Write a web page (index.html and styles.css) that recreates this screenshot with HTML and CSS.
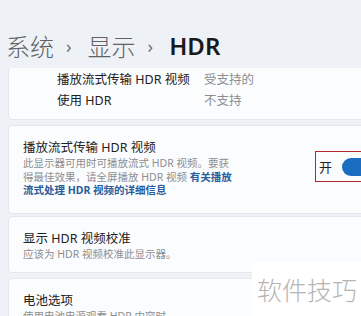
FILE: index.html
```html
<!DOCTYPE html>
<html lang="zh-CN">
<head>
    <meta charset="UTF-8">
    <meta name="viewport" content="width=device-width, initial-scale=1.0">
    <title>HDR</title>
    <link rel="stylesheet" href="styles.css">
</head>
<body>
    <div class="page">
        <div class="breadcrumb">
            <span class="crumb">系统</span>
            <span class="sep">›</span>
            <span class="crumb">显示</span>
            <span class="sep">›</span>
            <span class="crumb current">HDR</span>
        </div>

        <div class="card info">
            <div class="info-row">
                <span class="info-label">播放流式传输 HDR 视频</span>
                <span class="info-value">受支持的</span>
            </div>
            <div class="info-row">
                <span class="info-label">使用 HDR</span>
                <span class="info-value">不支持</span>
            </div>
        </div>

        <div class="group">
            <div class="card setting stream">
                <div class="setting-text">
                    <div class="setting-title">播放流式传输 HDR 视频</div>
                    <div class="setting-desc">此显示器可用时可播放流式 HDR 视频。要获得最佳效果，请全屏播放 HDR 视频 <a href="#" class="link">有关播放流式处理 HDR 视频的详细信息</a></div>
                </div>
                <div class="toggle-box">
                    <span class="toggle-label">开</span>
                    <span class="toggle"><span class="knob"></span></span>
                </div>
            </div>

            <div class="card setting">
                <div class="setting-text">
                    <div class="setting-title">显示 HDR 视频校准</div>
                    <div class="setting-desc">应该为 HDR 视频校准此显示器。</div>
                </div>
            </div>
        </div>

        <div class="card setting">
            <div class="setting-text">
                <div class="setting-title">电池选项</div>
                <div class="setting-desc">使用电池电源观看 HDR 内容时</div>
            </div>
        </div>
    </div>

    <div class="watermark">软件技巧</div>
</body>
</html>
```

FILE: styles.css
```css
body {
    margin: 0;
    width: 361px;
    height: 316px;
    overflow: hidden;
    background-color: #eef2f7;
    font-family: "Noto Sans", "Noto Sans CJK SC", sans-serif;
    color: #1b1b1b;
    position: relative;
}

.page {
    padding-left: 8px;
    width: 392px;
}

.breadcrumb {
    height: 68px;
    display: flex;
    align-items: center;
    font-size: 24px;
    line-height: 28px;
    padding-top: 24px;
    box-sizing: border-box;
    margin-left: -2px;
}

.crumb {
    color: #5f6266;
    font-family: "Noto Sans CJK SC", sans-serif;
    font-weight: 300;
}

.crumb.current {
    color: #1a1a1a;
    font-family: "Noto Sans", "Noto Sans CJK SC", sans-serif;
    font-weight: 600;
}

.sep {
    color: #6a6d72;
    font-size: 18px;
    margin: 0 16px 0 12px;
}

.card {
    background-color: #fbfcfd;
    border: 1px solid #e4e8ed;
    border-radius: 4px;
    box-sizing: border-box;
}

.info {
    height: 52px;
    padding: 0 0 0 48px;
    margin-bottom: 5px;
    border-top: none;
}

.info-row {
    display: flex;
    height: 21px;
    align-items: center;
    font-size: 12.5px;
}

.info-label {
    width: 147px;
    color: #222;
}

.info-value {
    color: #8a8c90;
}

.group {
    display: flex;
    flex-direction: column;
    gap: 2px;
    margin-bottom: 5px;
}

.setting {
    display: flex;
    padding: 13px 14px 11px 14px;
}

.stream {
    padding-bottom: 15px;
}

.setting-text {
    width: 212px;
}

.setting-title {
    font-size: 12.5px;
    line-height: 18px;
    color: #222;
}

.setting-desc {
    font-size: 10.5px;
    line-height: 13.5px;
    color: #8c8e92;
}

.link {
    color: #2a5c9c;
    font-weight: 700;
    text-decoration: none;
}

.toggle-box {
    margin-left: auto;
    margin-top: 12px;
    width: 70px;
    height: 31px;
    border: 1.5px solid #b3262b;
    box-sizing: border-box;
    display: flex;
    align-items: center;
    padding-left: 3px;
    gap: 10px;
}

.toggle-label {
    font-size: 13px;
    color: #222;
}

.toggle {
    width: 40px;
    height: 18px;
    border-radius: 9px;
    background-color: #1a6cc0;
    position: relative;
}

.knob {
    position: absolute;
    right: 4px;
    top: 4px;
    width: 10px;
    height: 10px;
    border-radius: 50%;
    background-color: #fff;
}

.watermark {
    position: absolute;
    left: 252px;
    top: 262px;
    width: 109px;
    height: 54px;
    background-color: #ffffff;
    color: #b4b4b4;
    font-family: "Noto Sans CJK SC", sans-serif;
    font-weight: 300;
    font-size: 25px;
    line-height: 54px;
    padding-left: 5px;
    box-sizing: border-box;
}
```
